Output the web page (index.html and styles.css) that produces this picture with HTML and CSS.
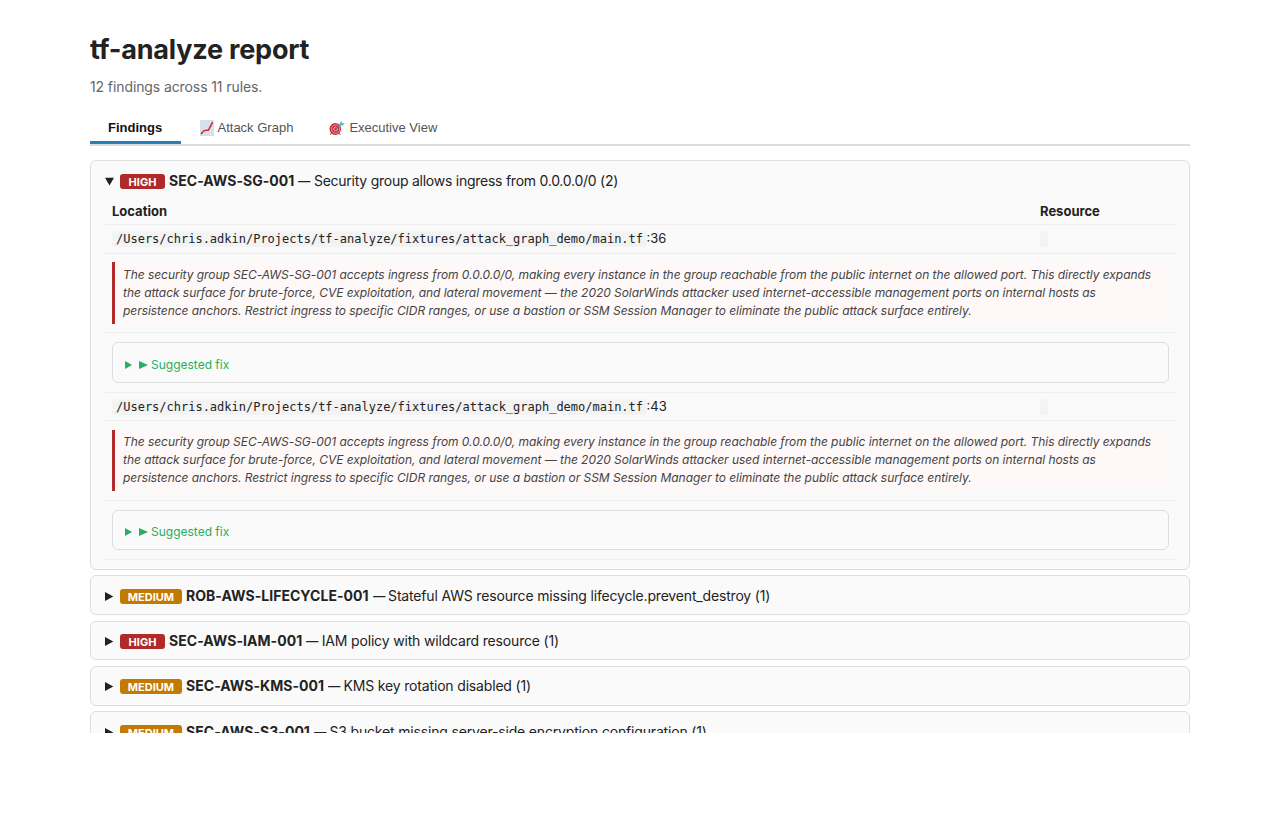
FILE: index.html
```html
<!DOCTYPE html>
<html lang="en">
<head>
<meta charset="utf-8">
<title>tf-analyze report</title>
<link rel="stylesheet" href="styles.css">
</head>
<body>
<main class="report">
  <h1>tf-analyze report</h1>
  <p class="summary-line">12 findings across 11 rules.</p>
  <nav class="tabs">
    <button class="tab active">Findings</button>
    <button class="tab graph"><svg class="emoji" viewBox="0 0 14 16"><rect width="14" height="16" fill="#d3dfe9"/><path d="M3.5 0v16M7 0v16M10.5 0v16M0 4h14M0 8h14M0 12h14" stroke="#dfe8f0" stroke-width=".6"/><path d="M1 14L4.2 10.6L8.5 10L12.6 2.2" fill="none" stroke="#d3232e" stroke-width="1.5"/></svg>Attack Graph</button>
    <button class="tab exec"><svg class="emoji target" viewBox="0 0 16 16"><path d="M2 13l-.5 2M10.5 13l.8 2" stroke="#a8605a" stroke-width="1"/><ellipse cx="6.3" cy="9" rx="5.8" ry="6" fill="#c92737"/><circle cx="6.6" cy="9" r="4.1" fill="none" stroke="#eeb9bf" stroke-width=".8"/><circle cx="6.6" cy="9" r="1.9" fill="none" stroke="#f1c8cc" stroke-width=".9"/><path d="M6.6 9L12 4.2" stroke="#537985" stroke-width="1.2"/><path d="M10 5.7L10.7 3L13 1L13.2 3L15.8 3.5L13.6 5.6Z" fill="#58bfd3"/></svg>Executive View</button>
  </nav>
  <section class="cards">
    <article class="card open">
      <div class="head"><svg class="mark" viewBox="0 0 9 9"><path d="M0 .8h9L4.5 8.6z"/></svg><span class="badge high">HIGH</span><strong>SEC-AWS-SG-001</strong><span class="dash">—</span><span class="desc tight">Security group allows ingress from 0.0.0.0/0 (2)</span></div>
      <div class="table">
        <div class="row labels"><b>Location</b><b>Resource</b></div>
        <div class="row place first"><span><code>/Users/chris.adkin/Projects/tf-analyze/fixtures/attack_graph_demo/main.tf</code>:36</span><span><code></code></span></div>
        <div class="row why"><p>The security group SEC-AWS-SG-001 accepts ingress from 0.0.0.0/0, making every instance in the group reachable from the public internet on the allowed port. This directly expands<br>the attack surface for brute-force, CVE exploitation, and lateral movement — the 2020 SolarWinds attacker used internet-accessible management ports on internal hosts as<br>persistence anchors. Restrict ingress to specific CIDR ranges, or use a bastion or SSM Session Manager to eliminate the public attack surface entirely.</p></div>
        <div class="row fix"><div class="fixbox"><svg class="tri" viewBox="0 0 7 8"><path d="M0 0l7 4-7 4z"/></svg><svg class="tri wide" viewBox="0 0 9 8"><path d="M0 0l9 4-9 4z"/></svg>Suggested fix</div></div>
        <div class="row place second"><span><code>/Users/chris.adkin/Projects/tf-analyze/fixtures/attack_graph_demo/main.tf</code>:43</span><span><code></code></span></div>
        <div class="row why second"><p>The security group SEC-AWS-SG-001 accepts ingress from 0.0.0.0/0, making every instance in the group reachable from the public internet on the allowed port. This directly expands<br>the attack surface for brute-force, CVE exploitation, and lateral movement — the 2020 SolarWinds attacker used internet-accessible management ports on internal hosts as<br>persistence anchors. Restrict ingress to specific CIDR ranges, or use a bastion or SSM Session Manager to eliminate the public attack surface entirely.</p></div>
        <div class="row fix second"><div class="fixbox"><svg class="tri" viewBox="0 0 7 8"><path d="M0 0l7 4-7 4z"/></svg><svg class="tri wide" viewBox="0 0 9 8"><path d="M0 0l9 4-9 4z"/></svg>Suggested fix</div></div>
      </div>
    </article>
    <article class="card gap5 h40"><div class="head"><svg class="mark" viewBox="0 0 9 9"><path d="M0 0L8.3 4.5L0 9z"/></svg><span class="badge medium">MEDIUM</span><strong>ROB-AWS-LIFECYCLE-001</strong><span class="dash">—</span><span class="desc">Stateful AWS resource missing lifecycle.prevent_destroy (1)</span></div></article>
    <article class="card gap6 h39"><div class="head short"><svg class="mark" viewBox="0 0 9 9"><path d="M0 0L8.3 4.5L0 9z"/></svg><span class="badge high">HIGH</span><strong>SEC-AWS-IAM-001</strong><span class="dash">—</span><span class="desc">IAM policy with wildcard resource (1)</span></div></article>
    <article class="card gap6 h40"><div class="head short"><svg class="mark" viewBox="0 0 9 9"><path d="M0 0L8.3 4.5L0 9z"/></svg><span class="badge medium">MEDIUM</span><strong>SEC-AWS-KMS-001</strong><span class="dash">—</span><span class="desc">KMS key rotation disabled (1)</span></div></article>
    <article class="card gap5 h40"><div class="head"><svg class="mark" viewBox="0 0 9 9"><path d="M0 0L8.3 4.5L0 9z"/></svg><span class="badge medium">MEDIUM</span><strong>SEC-AWS-S3-001</strong><span class="dash">—</span><span class="desc">S3 bucket missing server-side encryption configuration (1)</span></div></article>
  </section>
</main>
</body>
</html>
```
FILE: styles.css
```css
* { box-sizing: border-box; }
body { margin: 0; background: #fff; color: #222; font-family: Inter, "Liberation Sans", sans-serif; font-size: 14px; }
.report { width: 1100px; height: 733px; margin: 0 auto; padding-top: 32px; overflow: hidden; }
h1 { margin: 0; height: 36px; line-height: 35px; font-size: 27px; font-weight: 700; letter-spacing: -0.2px; white-space: nowrap; }
.summary-line { margin: 9px 0 0; height: 20px; line-height: 20px; color: #666; font-size: 14px; letter-spacing: -.1px; }
.tabs { display: flex; height: 35px; margin-top: 14px; border-bottom: 2px solid #ddd; }
.tab { display: flex; align-items: center; height: 33px; padding: 3px 18px 0; border: 0; border-bottom: 3px solid transparent; background: none; color: #555; font: 13px "Liberation Sans", Arial, sans-serif; white-space: nowrap; }
.tab.active { width: 91px; color: #111; border-color: #2980b9; font-weight: 700; }
.graph { padding-left: 19px; }
.graph .emoji { margin-right: 3.5px; }
.emoji { width: 14px; height: 16px; margin-right: 4px; flex: none; }
.target { width: 16px; }
.cards { padding-top: 14px; }
.card { border: 1px solid #ddd; border-radius: 6px; background: #fafafa; overflow: hidden; padding: 0 14px; }
.open { height: 410px; }
.gap5 { margin-top: 5px; }
.gap6 { margin-top: 6px; }
.h40 { height: 40px; }
.h39 { height: 39px; }
.head { display: flex; align-items: center; height: 40px; white-space: nowrap; line-height: 20px; }
.head.short { height: 38px; }
.mark { width: 9px; height: 9px; margin-right: 6px; fill: #222; flex: none; }
.badge { height: 15px; margin: 1px 4px 0 0; border-radius: 3px; color: #fff; font-size: 11px; font-weight: 700; line-height: 16px; text-align: center; flex: none; }
.high { width: 45px; background: #b02a2a; }
.medium { width: 62px; background: #c27a00; }
.head strong { margin-right: 4px; font-weight: 700; letter-spacing: .04px; }
.dash { width: 15.5px; letter-spacing: -1px; transform: scaleX(.88); transform-origin: left; }
.desc { letter-spacing: -.17px; }
.desc.tight { letter-spacing: -.25px; }
.table { margin: -4px 0 0 -1px; width: 1072px; font-size: 13px; }
.row { display: grid; grid-template-columns: 928px 1fr; border-bottom: 1px solid #eee; padding: 0 7px 0 8px; }
.labels { height: 28px; line-height: 28px; }
.place { height: 29px; line-height: 28px; }
.place.first { line-height: 27px; }
.place.second { height: 28px; line-height: 27px; }
code { display: inline-block; height: 16px; padding: 0 4px; margin-right: -.5px; border-radius: 3px; background: #f3f3f3; font: 12px/16px "DejaVu Sans Mono", monospace; letter-spacing: -.005px; vertical-align: middle; }
.why, .fix { display: block; }
.why { height: 79px; padding-top: 8px; }
.why p { margin: 0; height: 62px; padding: 4px 8px; border-left: 3px solid #b02a2a; background: #fff8f8; color: #444; font-size: 12px; font-style: italic; line-height: 18px; letter-spacing: -.045px; white-space: nowrap; }
.why.second { height: 80px; padding-top: 9px; }
.why.second p { height: 61px; padding-top: 3px; }
.fix { height: 60px; padding-top: 9px; }
.fixbox { display: flex; align-items: center; height: 41px; padding: 4px 12px 0; border: 1px solid #ddd; border-radius: 6px; color: #27ae60; font-size: 12px; }
.fix.second { height: 59px; }
.fix.second .fixbox { height: 40px; padding-top: 3px; }
.tri { width: 7px; height: 8px; margin-right: 7px; fill: #27ae60; }
.tri.wide { width: 9px; margin-right: 3px; }
```
